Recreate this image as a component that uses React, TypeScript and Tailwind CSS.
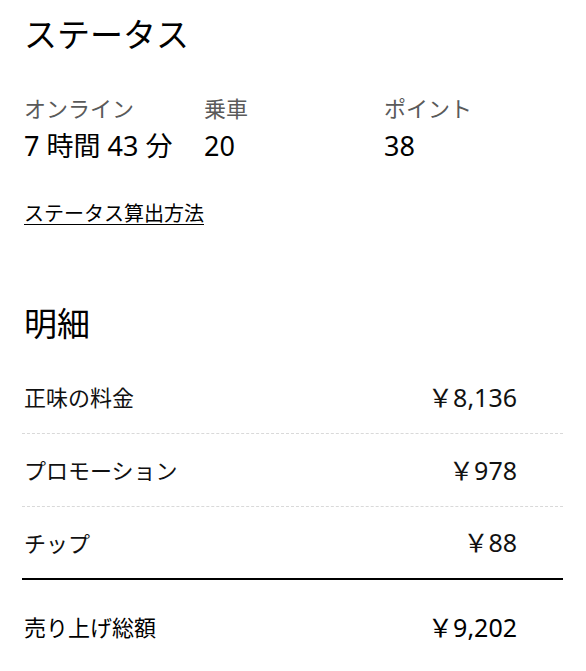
import React from "react";

const font = { fontFamily: '"Noto Sans", "Noto Sans CJK JP", sans-serif' };

function Row({ label, value, border }: { label: string; value: string; border: "dashed" | "solid" | "none" }) {
  return (
    <div
      className={
        "flex items-center justify-between h-[73px] " +
        (border === "dashed" ? "border-b border-dashed border-[#d9d9d9]" : border === "solid" ? "border-b-2 border-black" : "")
      }
    >
      <span className="text-[22px] leading-none text-[#111] ml-[2px]">{label}</span>
      <span className="text-[25px] leading-none text-[#111] mr-[46px]">{value}</span>
    </div>
  );
}

export default function App() {
  return (
    <div className="w-[586px] h-[671px] bg-white overflow-hidden text-black" style={font}>
      <div className="pl-[24px] pr-[23px]">
        <h1 className="text-[33px] leading-none font-normal pt-[18px]">ステータス</h1>
        <div className="grid grid-cols-[180px_180px_1fr] mt-[46px]">
          {[
            ["オンライン", "7 時間 43 分"],
            ["乗車", "20"],
            ["ポイント", "38"],
          ].map(([l, v]) => (
            <div key={l} className="flex flex-col">
              <span className="text-[22px] leading-none text-[#5a5a5a]">{l}</span>
              <span className="text-[27px] leading-none mt-[13px]">{v}</span>
            </div>
          ))}
        </div>
        <div className="mt-[44px]">
          <span className="text-[20px] leading-none underline underline-offset-[3px] decoration-1">ステータス算出方法</span>
        </div>
        <h2 className="text-[33px] leading-none font-normal mt-[80px]">明細</h2>
        <div className="-ml-[2px] mt-[21px]">
          <Row label="正味の料金" value="￥8,136" border="dashed" />
          <Row label="プロモーション" value="￥978" border="dashed" />
          <Row label="チップ" value="￥88" border="solid" />
          <div className="flex items-center justify-between h-[94px]">
            <span className="text-[22px] leading-none ml-[2px]">売り上げ総額</span>
            <span className="text-[25px] leading-none mr-[46px]">￥9,202</span>
          </div>
        </div>
      </div>
    </div>
  );
}
